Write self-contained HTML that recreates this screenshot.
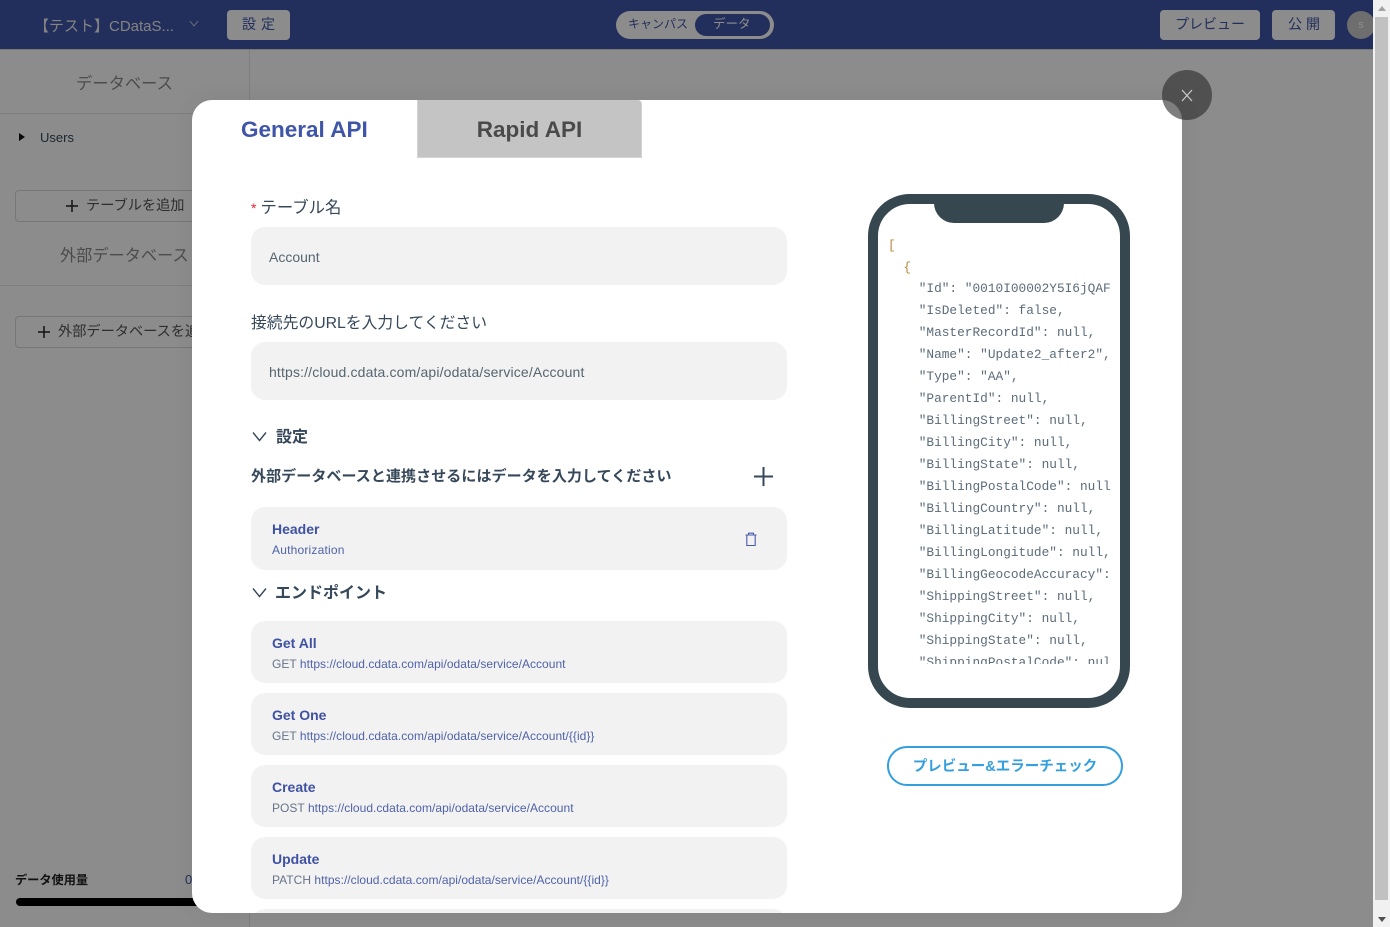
<!DOCTYPE html>
<html lang="ja"><head><meta charset="utf-8"><title>API</title>
<style>
*{box-sizing:border-box}
html,body{margin:0;padding:0;width:1390px;height:927px;overflow:hidden;background:#fff}
body{position:relative;font-family:"Liberation Sans","Noto Sans CJK JP",sans-serif;color:#36485a}
.a{position:absolute;white-space:nowrap}
.t{line-height:20px}
.card{position:absolute;left:59px;width:536px;background:#f2f2f2;border-radius:14px}
.card b{position:absolute;left:21px;top:12px;font-size:14px;line-height:20px;color:#3f51a3;white-space:nowrap}
.card span{position:absolute;left:21px;top:34px;font-size:12px;line-height:18px;color:#4f63a8;white-space:nowrap;letter-spacing:.03px}
.card span i{font-style:normal;color:#66738a}
pre{position:absolute;margin:0;font:12.8px/22px "Liberation Mono",monospace;color:#5c6c7a}
</style></head><body>
<!-- page under overlay -->
<div class="a" style="left:0;top:0;width:1373px;height:49px;background:#3f55a8"></div>
<div class="a" style="left:249px;top:49px;width:1px;height:878px;background:#e6e6e6"></div>
<div class="a" style="left:0;top:113px;width:249px;height:1px;background:#e6e6e6"></div>
<div class="a" style="left:0;top:285px;width:249px;height:1px;background:#e6e6e6"></div>
<div class="a t" style="left:34px;top:17px;font-size:15px;color:#eee">【テスト】CDataS...</div>
<svg class="a" style="left:189px;top:20px" width="10" height="8" viewBox="0 0 10 8"><path d="M1 1l4 5 4-5" fill="none" stroke="#ccd" stroke-width="1"/></svg>
<div class="a t" style="left:227px;top:10px;width:63px;height:30px;background:#fff;border-radius:4px;font-size:14px;line-height:29px;padding-left:15px;color:#3f55a8;letter-spacing:5px">設定</div>
<div class="a" style="left:616px;top:11px;width:158px;height:28px;background:#fff;border-radius:14px"></div>
<div class="a" style="left:695px;top:14px;width:75px;height:22px;background:#3f55a8;border-radius:11px"></div>
<div class="a t" style="left:628px;top:14px;font-size:12px;color:#3f55a8">キャンパス</div>
<div class="a t" style="left:713px;top:14px;font-size:12.5px;color:#fff">データ</div>
<div class="a t" style="left:1160px;top:10px;width:100px;height:30px;background:#fff;border-radius:4px;font-size:14px;line-height:28px;text-align:center;color:#3f55a8">プレビュー</div>
<div class="a t" style="left:1272px;top:10px;width:63px;height:30px;background:#fff;border-radius:4px;font-size:14px;line-height:28px;padding-left:16px;color:#3f55a8;letter-spacing:4px">公開</div>
<div class="a" style="left:1347px;top:11px;width:28px;height:28px;background:#c8c8c8;border-radius:50%;font-size:11px;line-height:28px;text-align:center;color:#fff">s</div>
<div class="a t" style="left:76px;top:74px;font-size:16.3px;color:#8a8a8a">データベース</div>
<div class="a" style="left:19px;top:133px;width:0;height:0;border-left:6px solid #111;border-top:4px solid transparent;border-bottom:4px solid transparent"></div>
<div class="a t" style="left:40px;top:128px;font-size:13px;color:#36485a">Users</div>
<div class="a" style="left:15px;top:190px;width:240px;height:32px;border:1px solid #d9d9d9;border-radius:4px"></div>
<svg class="a" style="left:66px;top:200px" width="12" height="12" viewBox="0 0 12 12"><path d="M6 0v12M0 6h12" stroke="#222" stroke-width="1.5"/></svg>
<div class="a t" style="left:86px;top:196px;font-size:14.2px;color:#555">テーブルを追加</div>
<div class="a t" style="left:60px;top:246px;font-size:16.2px;color:#8a8a8a">外部データベース</div>
<div class="a" style="left:15px;top:316px;width:240px;height:32px;border:1px solid #d9d9d9;border-radius:4px"></div>
<svg class="a" style="left:38px;top:326px" width="12" height="12" viewBox="0 0 12 12"><path d="M6 0v12M0 6h12" stroke="#222" stroke-width="1.5"/></svg>
<div class="a t" style="left:58px;top:322px;font-size:14.2px;color:#555">外部データベースを追加</div>
<div class="a t" style="left:15px;top:870px;font-size:12.2px;font-weight:700;color:#222">データ使用量</div>
<div class="a t" style="left:185px;top:870px;font-size:13px;color:#3f55a8">0</div>
<div class="a" style="left:16px;top:898px;width:200px;height:8px;background:#000;border-radius:4px"></div>
<!-- overlay -->
<div class="a" style="left:0;top:0;width:1373px;height:927px;background:rgba(0,0,0,.45)"></div>
<div class="a" style="left:0;top:49px;width:1373px;height:1px;background:#777"></div>
<!-- scrollbar -->
<div class="a" style="left:1373px;top:0;width:17px;height:927px;background:#f1f1f1"></div>
<div class="a" style="left:1375px;top:17px;width:13px;height:883px;background:#c1c1c1"></div>
<div class="a" style="left:1378px;top:6px;border-left:4px solid transparent;border-right:4px solid transparent;border-bottom:5px solid #a3a3a3;width:0;height:0"></div>
<div class="a" style="left:1378px;top:917px;border-left:4px solid transparent;border-right:4px solid transparent;border-top:5px solid #505050;width:0;height:0"></div>
<!-- modal -->
<div class="a" style="left:192px;top:100px;width:990px;height:813px;background:#fff;border-radius:20px;overflow:hidden;box-shadow:0 0 24px rgba(0,0,0,.06)">
 <div class="a" style="left:49px;top:15px;font-size:22.5px;line-height:30px;font-weight:700;color:#3f55a8">General API</div>
 <div class="a" style="left:225px;top:0;width:225px;height:58px;background:#c4c4c4;border:1px solid #d4d4d4;border-top:0;border-radius:0 4px 0 0;font-size:22.5px;line-height:60px;font-weight:700;text-align:center;color:#4a4a4a">Rapid API</div>
 <div class="a" style="left:59px;top:95px;font-size:16.4px;line-height:26px;color:#36485a"><span style="color:#f5222d;font-size:14px;margin-right:4px">*</span>テーブル名</div>
 <div class="a" style="left:59px;top:127px;width:536px;height:58px;background:#f2f2f2;border-radius:14px;padding-left:18px;font-size:14px;line-height:60px;color:#56656f">Account</div>
 <div class="a" style="left:59px;top:211px;font-size:15.8px;line-height:26px;color:#36485a">接続先のURLを入力してください</div>
 <div class="a" style="left:59px;top:242px;width:536px;height:58px;background:#f2f2f2;border-radius:14px;padding-left:18px;font-size:14px;line-height:60px;color:#56656f;letter-spacing:.15px">https://cloud.cdata.com/api/odata/service/Account</div>
 <svg class="a" style="left:60px;top:331px" width="15" height="11" viewBox="0 0 15 11"><path d="M1 1.5l6.5 8 6.5-8" fill="none" stroke="#36485a" stroke-width="1.4"/></svg>
 <div class="a" style="left:84px;top:327px;font-size:16px;line-height:22px;font-weight:700;color:#36485a">設定</div>
 <div class="a" style="left:59px;top:366px;font-size:15px;line-height:22px;font-weight:700;color:#36485a;letter-spacing:.08px">外部データベースと連携させるにはデータを入力してください</div>
 <svg class="a" style="left:561px;top:366px" width="21" height="21" viewBox="0 0 21 21"><path d="M10.5 1v19M1 10.5h19" stroke="#36485a" stroke-width="2" fill="none"/></svg>
 <div class="card" style="top:407px;height:63px"><b>Header</b><span style="letter-spacing:.2px">Authorization</span>
  <svg class="a" style="left:493px;top:25px" width="14" height="15" viewBox="0 0 14 15"><path d="M1.5 3h11M4.5 3V1.2h5V3M2.8 3v10.5h8.4V3" fill="none" stroke="#4a5cae" stroke-width="1.1"/></svg>
 </div>
 <svg class="a" style="left:60px;top:487px" width="15" height="11" viewBox="0 0 15 11"><path d="M1 1.5l6.5 8 6.5-8" fill="none" stroke="#36485a" stroke-width="1.4"/></svg>
 <div class="a" style="left:83px;top:482px;font-size:16px;line-height:24px;font-weight:700;color:#36485a">エンドポイント</div>
 <div class="card" style="top:521px;height:62px"><b>Get All</b><span><i>GET</i> https://cloud.cdata.com/api/odata/service/Account</span></div>
 <div class="card" style="top:593px;height:62px"><b>Get One</b><span><i>GET</i> https://cloud.cdata.com/api/odata/service/Account/{{id}}</span></div>
 <div class="card" style="top:665px;height:62px"><b>Create</b><span><i>POST</i> https://cloud.cdata.com/api/odata/service/Account</span></div>
 <div class="card" style="top:737px;height:62px"><b>Update</b><span><i>PATCH</i> https://cloud.cdata.com/api/odata/service/Account/{{id}}</span></div>
 <div class="card" style="top:809px;height:62px"></div>
 <!-- phone -->
 <div class="a" style="left:676px;top:94px;width:262px;height:514px;border:10px solid #37474f;border-radius:42px;background:#fff"></div>
 <div class="a" style="left:742px;top:100px;width:130px;height:23px;background:#37474f;border-radius:0 0 20px 20px"></div>
 <div class="a" style="left:696px;top:134px;width:223px;height:430px;overflow:hidden">
<pre style="left:0;top:0"><span style="color:#b8873f;position:relative;top:1px">[</span>
  <span style="color:#b8873f;position:relative;top:1px">{</span>
    "Id": "0010I00002Y5I6jQAF
    "IsDeleted": false,
    "MasterRecordId": null,
    "Name": "Update2_after2",
    "Type": "AA",
    "ParentId": null,
    "BillingStreet": null,
    "BillingCity": null,
    "BillingState": null,
    "BillingPostalCode": null
    "BillingCountry": null,
    "BillingLatitude": null,
    "BillingLongitude": null,
    "BillingGeocodeAccuracy":
    "ShippingStreet": null,
    "ShippingCity": null,
    "ShippingState": null,
    "ShippingPostalCode": nul</pre>
 </div>
 <div class="a" style="left:695px;top:646px;width:236px;height:40px;border:2px solid #339fdd;border-radius:20px;font-size:14.5px;font-weight:700;line-height:38px;text-align:center;color:#339fdd">プレビュー&amp;エラーチェック</div>
</div>
<!-- close -->
<div class="a" style="left:1162px;top:70px;width:50px;height:50px;border-radius:50%;background:rgba(40,40,40,.6)"></div>
<svg class="a" style="left:1181px;top:89px" width="12" height="13" viewBox="0 0 12 13"><path d="M1 1l10 11M11 1L1 12" stroke="#ccc" stroke-width="1.2" fill="none"/></svg>
</body></html>
